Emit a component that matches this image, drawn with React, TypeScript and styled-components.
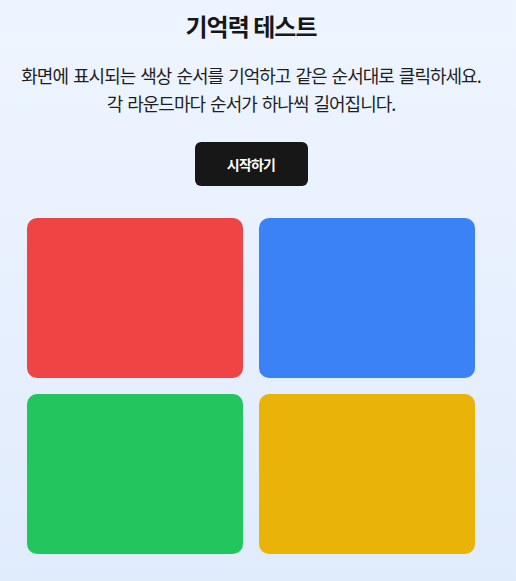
import styled, { createGlobalStyle } from "styled-components";

const GlobalStyle = createGlobalStyle`
  html, body {
    margin: 0;
    padding: 0;
  }
  body {
    min-height: 100vh;
    background: linear-gradient(to bottom, #eef5ff 0%, #e0ebfc 100%);
    font-family: "Noto Sans CJK KR", "Noto Sans", sans-serif;
    color: #171717;
  }
`;

const Page = styled.main`
  box-sizing: border-box;
  width: 502px;
  display: flex;
  flex-direction: column;
  align-items: center;
  padding: 8px 0 27px;
`;

const Title = styled.h1`
  margin: 0;
  font-size: 24px;
  line-height: 36px;
  font-weight: 700;
  letter-spacing: -1px;
`;

const Description = styled.p`
  margin: 17px 0 0;
  font-size: 18px;
  line-height: 28px;
  letter-spacing: -1px;
  word-spacing: 2px;
  text-align: center;
  color: #1f1f1f;
`;

const StartButton = styled.button`
  margin-top: 25px;
  width: 113px;
  height: 44px;
  border: none;
  border-radius: 6px;
  background: #171717;
  color: #ffffff;
  font-family: inherit;
  font-size: 14px;
  font-weight: 700;
  letter-spacing: -0.8px;
  cursor: pointer;
`;

const Board = styled.div`
  margin-top: 32px;
  width: 448px;
  display: grid;
  grid-template-columns: repeat(2, 1fr);
  gap: 16px;
`;

const Tile = styled.button<{ $color: string }>`
  height: 160px;
  border: none;
  border-radius: 10px;
  background: ${(p) => p.$color};
  cursor: pointer;
`;

const tiles = ["#ef4444", "#3b82f6", "#22c55e", "#eab308"];

export default function App() {
  return (
    <>
      <GlobalStyle />
      <Page>
        <Title>기억력 테스트</Title>
        <Description>
          화면에 표시되는 색상 순서를 기억하고 같은 순서대로 클릭하세요.
          <br />각 라운드마다 순서가 하나씩 길어집니다.
        </Description>
        <StartButton>시작하기</StartButton>
        <Board>
          {tiles.map((color) => (
            <Tile key={color} $color={color} />
          ))}
        </Board>
      </Page>
    </>
  );
}
